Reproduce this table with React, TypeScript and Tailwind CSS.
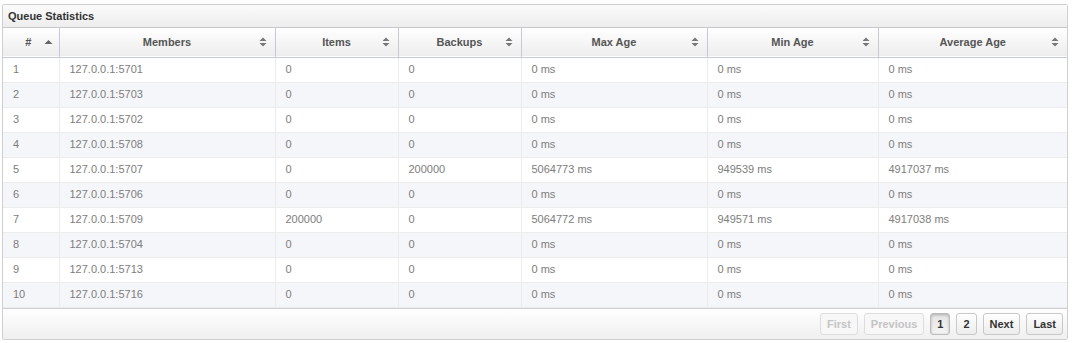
import React from "react";

type Row = [string, string, string, string, string, string];

const rows: Row[] = [
  ["127.0.0.1:5701", "0", "0", "0 ms", "0 ms", "0 ms"],
  ["127.0.0.1:5703", "0", "0", "0 ms", "0 ms", "0 ms"],
  ["127.0.0.1:5702", "0", "0", "0 ms", "0 ms", "0 ms"],
  ["127.0.0.1:5708", "0", "0", "0 ms", "0 ms", "0 ms"],
  ["127.0.0.1:5707", "0", "200000", "5064773 ms", "949539 ms", "4917037 ms"],
  ["127.0.0.1:5706", "0", "0", "0 ms", "0 ms", "0 ms"],
  ["127.0.0.1:5709", "200000", "0", "5064772 ms", "949571 ms", "4917038 ms"],
  ["127.0.0.1:5704", "0", "0", "0 ms", "0 ms", "0 ms"],
  ["127.0.0.1:5713", "0", "0", "0 ms", "0 ms", "0 ms"],
  ["127.0.0.1:5716", "0", "0", "0 ms", "0 ms", "0 ms"],
];

const columns = [
  { label: "#", width: "w-[56px]", pr: "pr-[5px]" },
  { label: "Members", width: "w-[216px]", pr: "pr-0" },
  { label: "Items", width: "w-[123px]", pr: "pr-0" },
  { label: "Backups", width: "w-[123px]", pr: "pr-0" },
  { label: "Max Age", width: "w-[186px]", pr: "pr-0" },
  { label: "Min Age", width: "w-[171px]", pr: "pr-0" },
  { label: "Average Age", width: "w-[189px]", pr: "pr-0" },
];

function SortIcon({ asc }: { asc?: boolean }) {
  if (asc)
    return (
      <svg width="9" height="10" viewBox="0 0 9 10" className="absolute right-[6px] top-1/2 -translate-y-1/2">
        <path d="M4.5 3 L8.5 7 L0.5 7 Z" fill="#666" />
      </svg>
    );
  return (
    <svg width="8" height="10" viewBox="0 0 8 10" className="absolute right-[8px] top-1/2 -translate-y-1/2">
      <path d="M4 0.5 L7.5 4 L0.5 4 Z" fill="#777" />
      <path d="M4 9.5 L7.5 6 L0.5 6 Z" fill="#777" />
    </svg>
  );
}

function PageButton({ label, disabled, active }: { label: string; disabled?: boolean; active?: boolean }) {
  const base = "h-[22px] px-[6px] rounded-[3px] border text-[11px] font-bold leading-[20px]";
  if (disabled)
    return <span className={`${base} border-[#ddd] bg-[#f7f7f7] text-[#c4c4c4]`}>{label}</span>;
  if (active)
    return (
      <span className={`${base} border-[#bbb] bg-gradient-to-b from-[#e4e4e4] to-[#f4f4f4] text-[#333] shadow-[inset_0_1px_3px_rgba(0,0,0,0.25)]`}>
        {label}
      </span>
    );
  return (
    <span className={`${base} border-[#c8c8c8] bg-gradient-to-b from-white to-[#ececec] text-[#333]`}>{label}</span>
  );
}

export default function App() {
  return (
    <div className="bg-white w-[1073px] h-[343px] pt-[4px] pl-[2px] font-['Liberation_Sans',Arial,sans-serif]">
      <div className="w-[1066px] border border-[#cfcfcf] rounded-[2px]">
        <div className="h-[23px] border-b border-[#c8c8c8] bg-gradient-to-b from-[#fbfbfb] to-[#ededed] px-[5px] text-[11px] font-bold leading-[23px] text-[#333]">
          Queue Statistics
        </div>
        <table className="table-fixed border-collapse w-[1064px]">
          <thead>
            <tr className="h-[29px] bg-gradient-to-b from-white to-[#ededed] border-b border-[#c5c8d6]">
              {columns.map((c, i) => (
                <th
                  key={c.label}
                  className={`${c.width} ${c.pr} relative p-0 text-center text-[11px] font-bold text-[#555] ${i > 0 ? "border-l border-[#c5c8d6]" : ""}`}
                >
                  {c.label}
                  <SortIcon asc={i === 0} />
                </th>
              ))}
            </tr>
          </thead>
          <tbody>
            {rows.map((r, i) => (
              <tr key={i} className={`h-[25px] border-b border-[#ececec] ${i % 2 === 1 ? "bg-[#f5f6f9]" : "bg-white"}`}>
                <td className="pl-[10px] text-[11px] text-[#7d7d7d]">{i + 1}</td>
                {r.map((v, j) => (
                  <td key={j} className="pl-[10px] border-l border-[#ececec] text-[11px] text-[#7d7d7d]">
                    {v}
                  </td>
                ))}
              </tr>
            ))}
          </tbody>
        </table>
        <div className="h-[31px] border-t border-[#d0d0d0] bg-gradient-to-b from-white to-[#efefef] flex items-center justify-end gap-[6px] pr-[4px]">
          <PageButton label="First" disabled />
          <PageButton label="Previous" disabled />
          <PageButton label="1" active />
          <PageButton label="2" />
          <PageButton label="Next" />
          <PageButton label="Last" />
        </div>
      </div>
    </div>
  );
}
